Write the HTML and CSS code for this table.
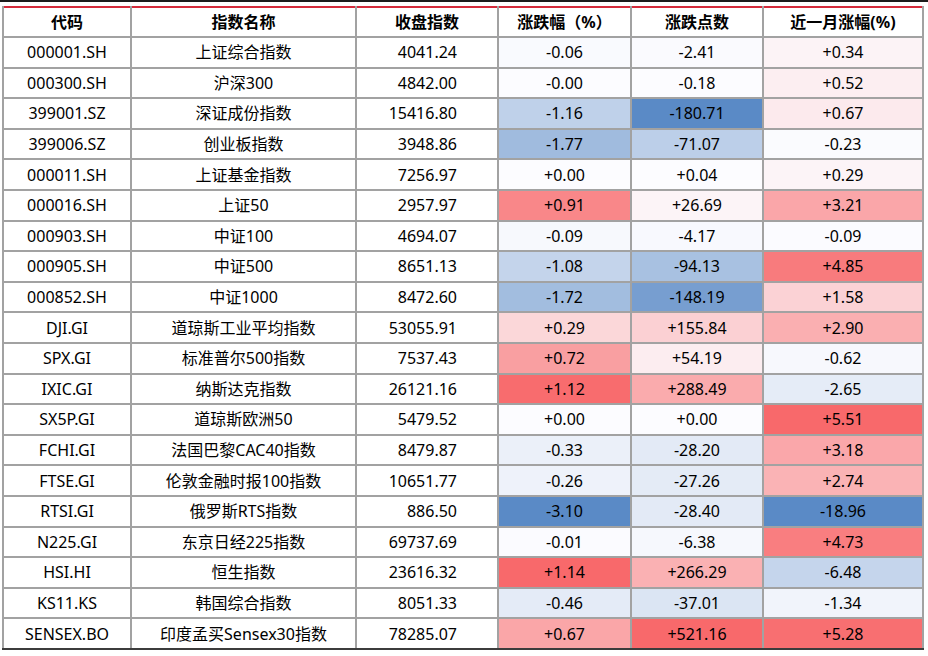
FILE: index.html
```html
<!DOCTYPE html>
<html lang="zh-CN">
<head>
<meta charset="utf-8">
<title>指数行情</title>
<link rel="stylesheet" href="styles.css">
</head>
<body>
<div class="topline"></div>
<div class="wrap">
<table class="quotes">
<colgroup>
<col class="c-code"><col class="c-name"><col class="c-close"><col class="c-pct"><col class="c-pts"><col class="c-mon">
</colgroup>
<thead>
<tr><th>代码</th><th>指数名称</th><th>收盘指数</th><th>涨跌幅（%）</th><th>涨跌点数</th><th>近一月涨幅(%)</th></tr>
</thead>
<tbody>
<tr><td>000001.SH</td><td>上证综合指数</td><td class="num">4041.24</td><td style="background:#F9FAFE">-0.06</td><td style="background:#FAFAFE">-2.41</td><td style="background:#FCF3F6">+0.34</td></tr>
<tr><td>000300.SH</td><td>沪深300</td><td class="num">4842.00</td><td style="background:#FCFCFF">-0.00</td><td style="background:#FCFCFF">-0.18</td><td style="background:#FCEEF1">+0.52</td></tr>
<tr><td>399001.SZ</td><td>深证成份指数</td><td class="num">15416.80</td><td style="background:#BFD1EA">-1.16</td><td style="background:#5A8AC6">-180.71</td><td style="background:#FCEAED">+0.67</td></tr>
<tr><td>399006.SZ</td><td>创业板指数</td><td class="num">3948.86</td><td style="background:#A0BBDE">-1.77</td><td style="background:#BCCFE9">-71.07</td><td style="background:#FAFBFE">-0.23</td></tr>
<tr><td>000011.SH</td><td>上证基金指数</td><td class="num">7256.97</td><td style="background:#FCFCFF">+0.00</td><td style="background:#FCFCFF">+0.04</td><td style="background:#FCF4F7">+0.29</td></tr>
<tr><td>000016.SH</td><td>上证50</td><td class="num">2957.97</td><td style="background:#F98789">+0.91</td><td style="background:#FCF4F7">+26.69</td><td style="background:#FAA6A9">+3.21</td></tr>
<tr><td>000903.SH</td><td>中证100</td><td class="num">4694.07</td><td style="background:#F7F9FD">-0.09</td><td style="background:#F8F9FE">-4.17</td><td style="background:#FBFBFF">-0.09</td></tr>
<tr><td>000905.SH</td><td>中证500</td><td class="num">8651.13</td><td style="background:#C4D4EB">-1.08</td><td style="background:#A8C1E1">-94.13</td><td style="background:#F87B7D">+4.85</td></tr>
<tr><td>000852.SH</td><td>中证1000</td><td class="num">8472.60</td><td style="background:#A2BDDF">-1.72</td><td style="background:#779ED0">-148.19</td><td style="background:#FBD2D5">+1.58</td></tr>
<tr><td>DJI.GI</td><td>道琼斯工业平均指数</td><td class="num">53055.91</td><td style="background:#FBD7D9">+0.29</td><td style="background:#FBD0D3">+155.84</td><td style="background:#FAAFB1">+2.90</td></tr>
<tr><td>SPX.GI</td><td>标准普尔500指数</td><td class="num">7537.43</td><td style="background:#F99FA1">+0.72</td><td style="background:#FCEDF0">+54.19</td><td style="background:#F7F8FD">-0.62</td></tr>
<tr><td>IXIC.GI</td><td>纳斯达克指数</td><td class="num">26121.16</td><td style="background:#F86C6E">+1.12</td><td style="background:#FAABAD">+288.49</td><td style="background:#E5ECF7">-2.65</td></tr>
<tr><td>SX5P.GI</td><td>道琼斯欧洲50</td><td class="num">5479.52</td><td style="background:#FCFCFF">+0.00</td><td style="background:#FCFCFF">+0.00</td><td style="background:#F8696B">+5.51</td></tr>
<tr><td>FCHI.GI</td><td>法国巴黎CAC40指数</td><td class="num">8479.87</td><td style="background:#EBF0F9">-0.33</td><td style="background:#E3EAF6">-28.20</td><td style="background:#FAA7AA">+3.18</td></tr>
<tr><td>FTSE.GI</td><td>伦敦金融时报100指数</td><td class="num">10651.77</td><td style="background:#EEF2FA">-0.26</td><td style="background:#E4EBF6">-27.26</td><td style="background:#FAB3B5">+2.74</td></tr>
<tr><td>RTSI.GI</td><td>俄罗斯RTS指数</td><td class="num">886.50</td><td style="background:#5A8AC6">-3.10</td><td style="background:#E3EAF6">-28.40</td><td style="background:#5A8AC6">-18.96</td></tr>
<tr><td>N225.GI</td><td>东京日经225指数</td><td class="num">69737.69</td><td style="background:#FBFBFF">-0.01</td><td style="background:#F6F8FD">-6.38</td><td style="background:#F97E80">+4.73</td></tr>
<tr><td>HSI.HI</td><td>恒生指数</td><td class="num">23616.32</td><td style="background:#F8696B">+1.14</td><td style="background:#FAB1B3">+266.29</td><td style="background:#C5D5EC">-6.48</td></tr>
<tr><td>KS11.KS</td><td>韩国综合指数</td><td class="num">8051.33</td><td style="background:#E4EBF7">-0.46</td><td style="background:#DBE5F3">-37.01</td><td style="background:#F1F4FB">-1.34</td></tr>
<tr><td>SENSEX.BO</td><td>印度孟买Sensex30指数</td><td class="num">78285.07</td><td style="background:#FAA6A8">+0.67</td><td style="background:#F8696B">+521.16</td><td style="background:#F86F71">+5.28</td></tr>
</tbody>
</table>
</div>
</body>
</html>
```
FILE: styles.css
```css
html, body {
  margin: 0;
  padding: 0;
  background: #ffffff;
}
body {
  font-family: "Noto Sans", "Noto Sans CJK SC", sans-serif;
  color: #000;
}
.topline {
  height: 2px;
  background: #1c1c1c;
}
.wrap {
  padding: 4px 0 0 2px;
}
.quotes {
  width: 920px;
  border-collapse: collapse;
  table-layout: fixed;
  font-size: 16px;
  border-top: 2px solid #d52b3b;
  border-bottom: 2px solid #3c3c3c;
  border-left: 1px solid #9a9a9a;
  border-right: 1px solid #9a9a9a;
}
.c-code { width: 128px; }
.c-name { width: 225px; }
.c-close { width: 142px; }
.c-pct { width: 133px; }
.c-pts { width: 132px; }
.c-mon { width: 160px; }
.quotes th,
.quotes td {
  height: 28.6px;
  padding: 0;
  text-align: center;
  vertical-align: middle;
  border: 2px solid #a2a2a2;
  line-height: 20px;
  white-space: nowrap;
}
.quotes th {
  font-weight: 700;
  height: 28px;
  border-top: none;
}
.quotes tbody tr:last-child td {
  border-bottom: 2px solid #3c3c3c;
}
.quotes td.num {
  text-align: right;
  padding-right: 40px;
}
```
